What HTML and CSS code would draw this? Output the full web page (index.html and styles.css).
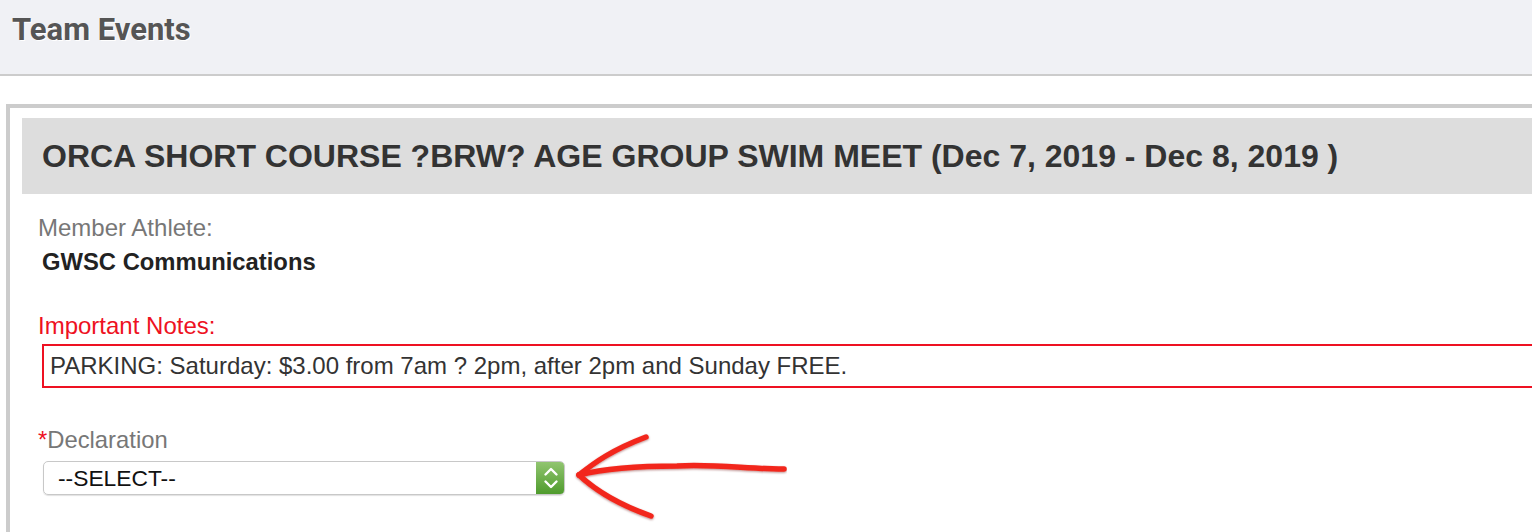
FILE: index.html
```html
<!DOCTYPE html>
<html>
<head>
<meta charset="utf-8">
<link rel="stylesheet" href="styles.css">
</head>
<body>
<header class="page-header">
  <h1 class="page-title">Team Events</h1>
</header>
<main class="event-box">
  <div class="event-title-bar">
    <h2 class="event-title">ORCA SHORT COURSE ?BRW? AGE GROUP SWIM MEET (Dec 7, 2019 - Dec 8, 2019 )</h2>
  </div>
  <section class="event-body">
    <div class="field-label">Member Athlete:</div>
    <div class="athlete-name">GWSC Communications</div>
    <div class="notes-label">Important Notes:</div>
    <div class="notes-box">PARKING: Saturday: $3.00 from 7am ? 2pm, after 2pm and Sunday FREE.</div>
    <div class="field-label decl-label"><span class="req">*</span>Declaration</div>
    <div class="select-wrap">
      <div class="select-box">
        <span class="select-text">--SELECT--</span>
        <span class="select-btn">
          <svg width="16" height="24" viewBox="0 0 16 24"><path d="M2.5 8.5 L8 3 L13.5 8.5 M2.5 15.5 L8 21 L13.5 15.5" fill="none" stroke="#fff" stroke-width="2.4" stroke-linecap="round" stroke-linejoin="round"/></svg>
        </span>
      </div>
      <svg class="arrow" width="230" height="100" viewBox="0 0 230 100">
        <defs>
          <filter id="sh" x="-10%" y="-10%" width="120%" height="130%">
            <feDropShadow dx="0" dy="1" stdDeviation="1" flood-color="#600" flood-opacity="0.45"/>
          </filter>
        </defs>
        <g fill="none" stroke="#f2281c" stroke-width="5.5" stroke-linecap="round" stroke-linejoin="round" filter="url(#sh)">
          <path d="M22 53 C50 46, 80 44, 120 44 C160 42, 190 47, 227 47"/>
          <path d="M22 53 C38 40, 55 28, 89 15"/>
          <path d="M22 53 C38 68, 60 82, 94 94"/>
        </g>
      </svg>
    </div>
  </section>
</main>
</body>
</html>
```
FILE: styles.css
```css
html, body {
  margin: 0;
  padding: 0;
  background: #fff;
  overflow: hidden;
}
body {
  width: 1532px;
  height: 532px;
  font-family: "Liberation Sans", Arial, sans-serif;
}
.page-header {
  height: 74px;
  background: #f0f1f5;
  border-bottom: 2px solid #ccc;
  display: flex;
  align-items: flex-start;
  padding-left: 12px;
}
.page-title {
  margin: 11px 0 0 0;
  font-family: Roboto, "Liberation Sans", sans-serif;
  font-weight: 700;
  font-size: 31px;
  color: #555;
  letter-spacing: 0;
  text-shadow: 1px 1px 0 #fff;
}
.event-box {
  margin: 28px 0 0 6px;
  width: 1560px;
  border: 4px solid #ccc;
  border-bottom: none;
  padding: 10px 12px 0 12px;
  box-sizing: border-box;
  height: 428px;
}
.event-title-bar {
  background: #ddd;
  height: 76px;
  display: flex;
  align-items: center;
  padding-left: 20px;
}
.event-title {
  margin: 0;
  font-size: 32px;
  font-weight: 700;
  color: #333;
  white-space: nowrap;
}
.event-body {
  padding: 20px 0 0 16px;
}
.field-label {
  font-size: 24px;
  color: #777;
  line-height: 28px;
}
.athlete-name {
  font-size: 23.8px;
  font-weight: 700;
  color: #222;
  margin: 6px 0 0 4px;
  line-height: 28px;
}
.notes-label {
  margin-top: 36px;
  font-size: 24px;
  color: #ee1122;
  line-height: 28px;
}
.notes-box {
  margin: 4px 0 0 4px;
  border: 2px solid #ee1122;
  height: 40px;
  display: flex;
  align-items: center;
  padding-left: 6px;
  font-size: 24px;
  color: #333;
}
.decl-label {
  margin-top: 38px;
  font-size: 23.8px;
}
.req {
  color: #ee1122;
}
.select-wrap {
  position: relative;
  margin: 7px 0 0 5px;
  width: 522px;
}
.select-box {
  height: 34px;
  border: 1px solid #c8c8c8;
  border-radius: 5px;
  box-sizing: border-box;
  display: flex;
  align-items: center;
  justify-content: space-between;
  box-shadow: 0 1px 1px rgba(0,0,0,0.12);
  overflow: hidden;
}
.select-text {
  padding-left: 14px;
  font-size: 22.8px;
  color: #111;
}
.select-btn {
  width: 29px;
  height: 34px;
  margin: -1px -1px -1px 0;
  background: linear-gradient(#93c672, #4d9a2b);
  border-radius: 0 5px 5px 0;
  display: flex;
  align-items: center;
  justify-content: center;
}
.arrow {
  position: absolute;
  left: 514px;
  top: -39px;
}
```
